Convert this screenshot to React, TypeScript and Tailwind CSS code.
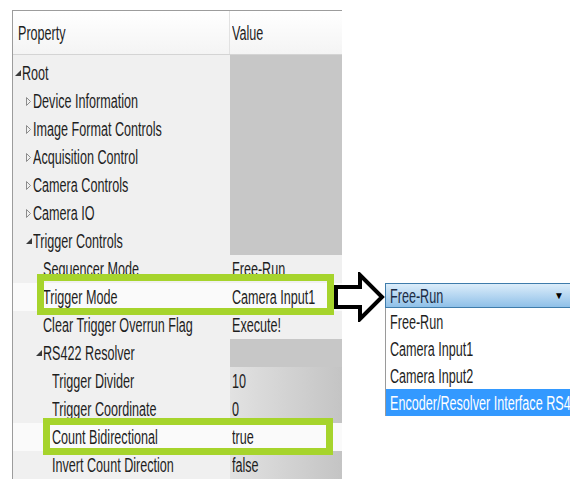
import React from 'react';

type Row = {
  label: string;
  value?: string;
  depth: number;
  toggle?: 'open' | 'closed';
  tone: 'gray' | 'light' | 'fade' | 'white';
};

const rows: Row[] = [
  { label: 'Root', depth: 0, toggle: 'open', tone: 'gray' },
  { label: 'Device Information', depth: 1, toggle: 'closed', tone: 'gray' },
  { label: 'Image Format Controls', depth: 1, toggle: 'closed', tone: 'gray' },
  { label: 'Acquisition Control', depth: 1, toggle: 'closed', tone: 'gray' },
  { label: 'Camera Controls', depth: 1, toggle: 'closed', tone: 'gray' },
  { label: 'Camera IO', depth: 1, toggle: 'closed', tone: 'gray' },
  { label: 'Trigger Controls', depth: 1, toggle: 'open', tone: 'gray' },
  { label: 'Sequencer Mode', value: 'Free-Run', depth: 2, tone: 'light' },
  { label: 'Trigger Mode', value: 'Camera Input1', depth: 2, tone: 'white' },
  { label: 'Clear Trigger Overrun Flag', value: 'Execute!', depth: 2, tone: 'light' },
  { label: 'RS422 Resolver', depth: 2, toggle: 'open', tone: 'gray' },
  { label: 'Trigger Divider', value: '10', depth: 3, tone: 'fade' },
  { label: 'Trigger Coordinate', value: '0', depth: 3, tone: 'fade' },
  { label: 'Count Bidirectional', value: 'true', depth: 3, tone: 'white' },
  { label: 'Invert Count Direction', value: 'false', depth: 3, tone: 'fade' },
];

const indent = ['pl-[2px]', 'pl-[13px]', 'pl-[23px]', 'pl-[32px]'];

const valueTone = {
  gray: 'bg-[#c7c7c7]',
  light: 'bg-[#f0f0f0]',
  fade: 'bg-gradient-to-r from-[#e2e2e2] to-[#c4c4c4]',
  white: 'bg-[#fafafa]',
};

const options = ['Free-Run', 'Camera Input1', 'Camera Input2', 'Encoder/Resolver Interface RS422'];

// squeezed label text, the grid renders with a narrow face
function Txt({ children, className = '' }: { children: React.ReactNode; className?: string }) {
  return (
    <span className={`inline-block shrink-0 origin-left scale-x-[0.63] whitespace-nowrap ${className}`}>{children}</span>
  );
}

function Toggle({ kind }: { kind?: 'open' | 'closed' }) {
  return (
    <span className="w-[7px] h-[10px] shrink-0 flex items-center">
      {kind === 'open' && (
        <svg width="6" height="6" viewBox="0 0 6 6">
          <path d="M6 0 L6 6 L0 6 Z" fill="#3a3a3a" />
        </svg>
      )}
      {kind === 'closed' && (
        <svg width="5" height="9" viewBox="0 0 5 9">
          <path d="M0.5 0.5 L4.5 4.5 L0.5 8.5 Z" fill="none" stroke="#8c8c8c" strokeWidth="1" />
        </svg>
      )}
    </span>
  );
}

export default function App() {
  return (
    <div className="relative w-[570px] h-[482px] overflow-hidden bg-white text-[20px] text-[#1e1e1e] font-['Liberation_Sans',Arial,sans-serif]">
      {/* property grid */}
      <div className="ml-[12px] mt-[10px] w-[330px] border-l border-t border-[#9c9c9c] bg-[#f0f0f0]">
        <div className="flex h-[44px] border-b border-[#d4d4d4] bg-gradient-to-b from-white to-[#f4f4f4]">
          <div className="w-[217px] shrink-0 flex items-center pl-[5px] border-r border-[#e2e2e2]">
            <Txt>Property</Txt>
          </div>
          <div className="flex-1 min-w-0 flex items-center pl-[2px]">
            <Txt>Value</Txt>
          </div>
        </div>
        <div className="flex h-[4px]">
          <div className="w-[217px] shrink-0" />
          <div className="flex-1 bg-[#c7c7c7]" />
        </div>
        {rows.map((r) => (
          <div key={r.label} className={`flex h-[28px] ${r.tone === 'white' ? 'bg-[#fafafa]' : ''}`}>
            <div className={`w-[217px] shrink-0 flex items-center ${indent[r.depth]}`}>
              <Toggle kind={r.toggle} />
              <Txt>{r.label}</Txt>
            </div>
            <div className={`flex-1 min-w-0 flex items-center pl-[2px] ${valueTone[r.tone]}`}>
              {r.value && <Txt>{r.value}</Txt>}
            </div>
          </div>
        ))}
      </div>

      {/* highlight frames */}
      <div className="absolute left-[37px] top-[274px] w-[297px] h-[41px] border-[7px] border-[#a6d42c]" />
      <div className="absolute left-[43px] top-[418px] w-[290px] h-[37px] border-[7px] border-[#a6d42c]" />

      {/* pointer arrow */}
      <svg className="absolute left-[333px] top-[272px]" width="52" height="50" viewBox="0 0 52 50">
        <path d="M3 15 L27 15 L27 3 L49 25 L27 47 L27 35 L3 35 Z" fill="white" stroke="black" strokeWidth="4" strokeLinejoin="miter" />
      </svg>

      {/* trigger mode dropdown */}
      <div className="absolute left-[385px] top-[283px] w-[190px]">
        <div className="h-[25px] flex items-center justify-between pl-[4px] pr-[10px] border border-[#3f7cab] bg-gradient-to-b from-[#dcedfa] to-[#8fc0e8] text-[#1b2b44]">
          <Txt>Free-Run</Txt>
          <span className="text-[10px] text-black">▼</span>
        </div>
        <div className="border-l border-[#9a9a9a] bg-white">
          {options.map((o, i) => (
            <div
              key={o}
              className={`h-[27px] flex items-center pl-[4px] overflow-hidden ${i === options.length - 1 ? 'bg-[#3399ff] text-white' : ''}`}
            >
              <Txt>{o}</Txt>
            </div>
          ))}
        </div>
      </div>
    </div>
  );
}
